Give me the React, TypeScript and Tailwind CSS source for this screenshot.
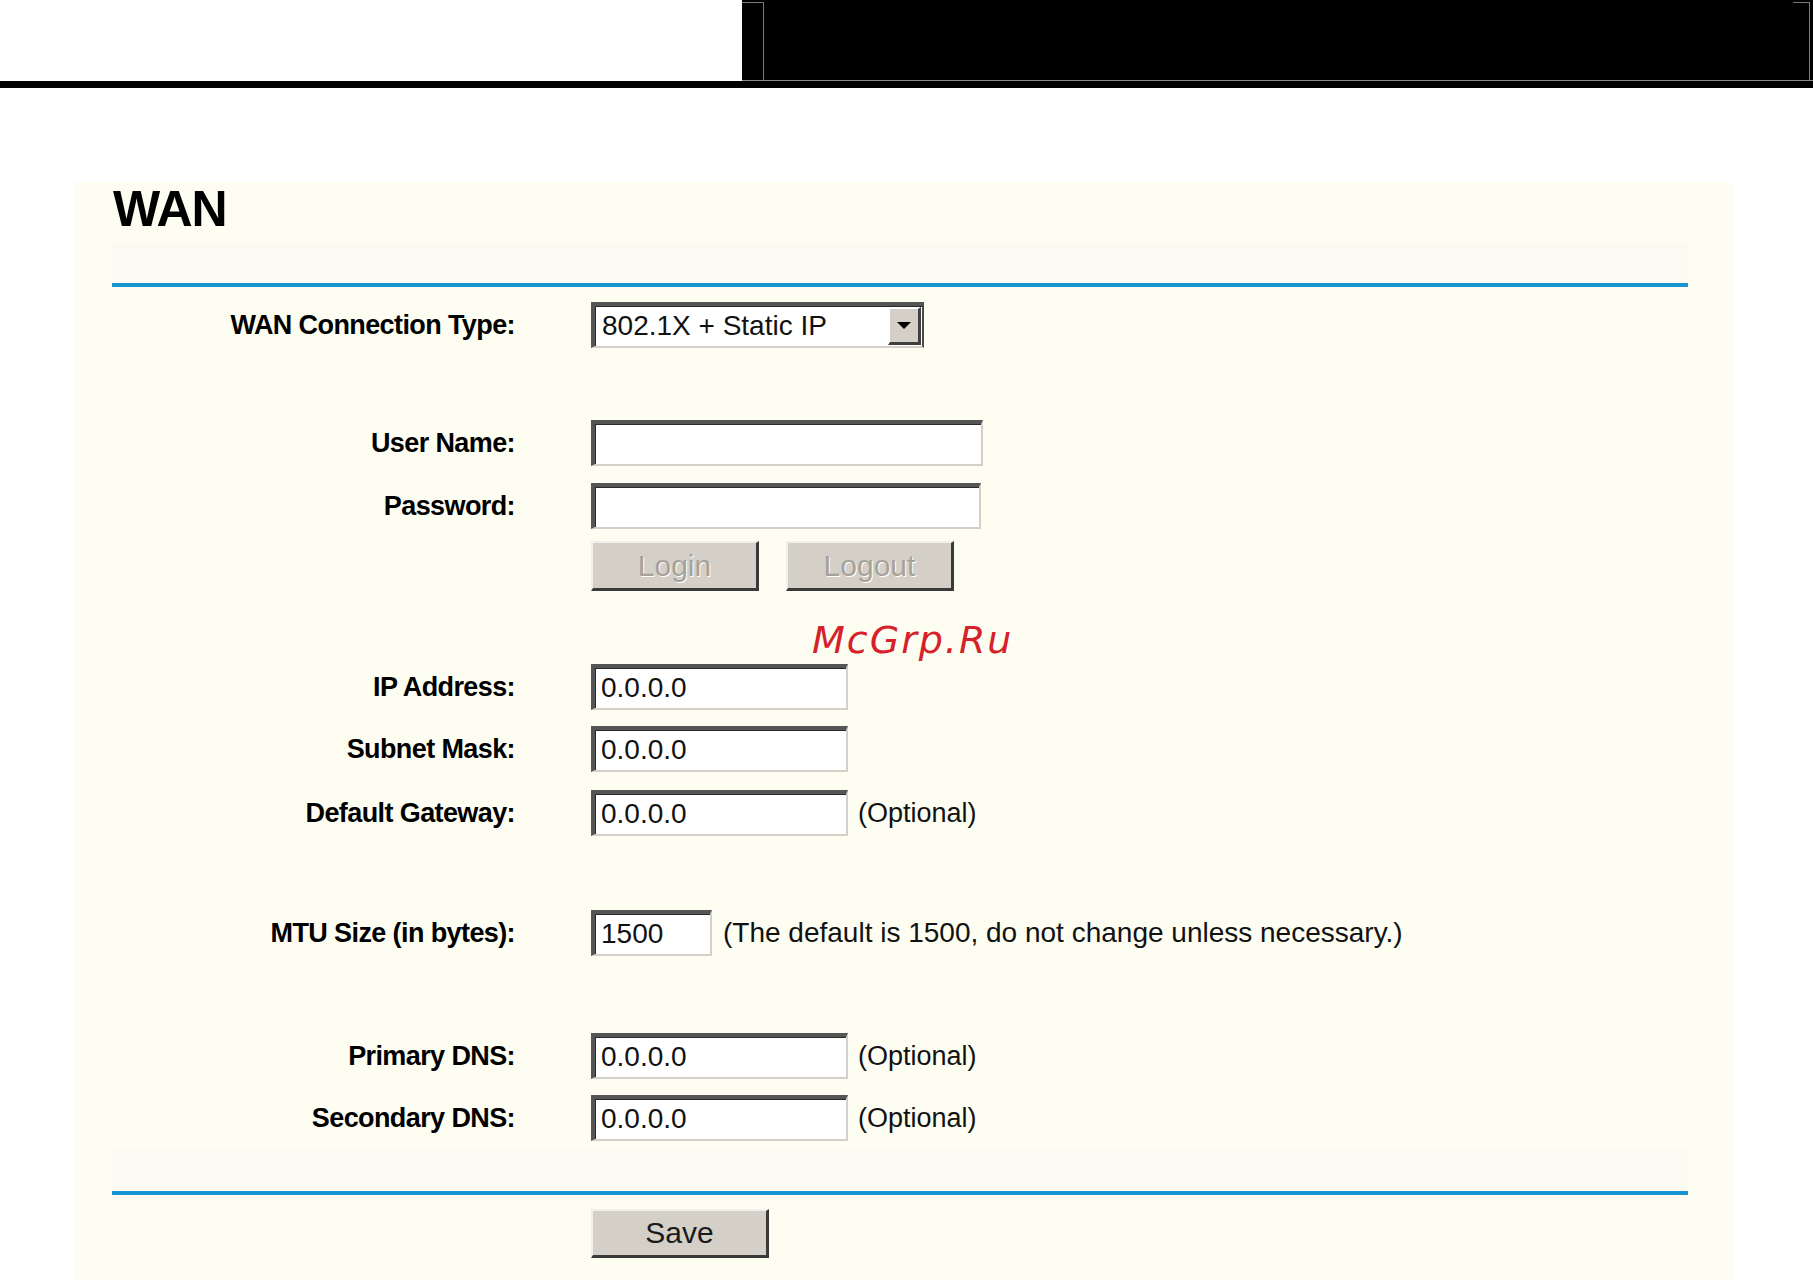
import React from "react";

const LABEL =
  "w-[403px] shrink-0 text-right text-[27px] font-bold tracking-[-0.6px] leading-none text-black font-['Liberation_Sans',Arial,sans-serif]";
const TEXT = "text-[28px] leading-none text-[#111] font-['Liberation_Sans',Arial,sans-serif]";

function Field({ w, value }: { w: string; value?: string }) {
  return (
    <div
      className={`${w} h-[46px] bg-white border-t-4 border-l-4 border-t-[#555555] border-l-[#555555] border-b-2 border-r-2 border-b-[#d4d0c8] border-r-[#d4d0c8] shadow-[inset_1px_1px_0_#2a2a2a] flex items-center pl-[6px] ${TEXT}`}
    >
      {value}
    </div>
  );
}

function Row({ mt, label, children }: { mt: string; label: string; children: React.ReactNode }) {
  return (
    <div className={`flex items-center h-[46px] ${mt}`}>
      <div className={LABEL}>{label}</div>
      <div className="ml-[76px] flex items-center">{children}</div>
    </div>
  );
}

function Btn({ w, h, children, disabled }: { w: string; h: string; children: React.ReactNode; disabled?: boolean }) {
  return (
    <div
      className={`${w} ${h} bg-[#d4d0c8] border-t-2 border-l-2 border-t-[#f2f0ea] border-l-[#f2f0ea] border-b-[3px] border-r-[3px] border-b-[#3a3a3a] border-r-[#3a3a3a] flex items-center justify-center text-[30px] leading-none font-['Liberation_Sans',Arial,sans-serif] ${
        disabled ? "text-[#a6a29a] [text-shadow:1px_1px_0_#ffffff]" : "text-[#1a1a1a]"
      }`}
    >
      {children}
    </div>
  );
}

function Optional() {
  return <span className={`ml-[10px] text-[27px] leading-none text-[#111] font-['Liberation_Sans',Arial,sans-serif]`}>(Optional)</span>;
}

export default function App() {
  return (
    <div className="relative w-[1813px] min-h-[1280px] bg-white overflow-hidden">
      {/* header */}
      <div className="flex h-[81px]">
        <div className="w-[742px] bg-white" />
        <div className="relative flex-1 bg-black border-b border-b-[#8a8a8a]">
          <div className="ml-[21px] mr-[3px] mt-[2px] h-[78px] border-l border-r border-[#7a7a7a]" />
          <div className="absolute left-0 top-[2px] w-[21px] h-px bg-[#7a7a7a]" />
          <div className="absolute right-[3px] top-[2px] w-[17px] h-px bg-[#7a7a7a]" />
        </div>
      </div>
      <div className="h-[7px] bg-black" />

      {/* panel */}
      <div className="mt-[94px] ml-[74px] w-[1659px] bg-[#fdfdf1] pl-[38px] pr-[45px] pb-[22px]">
        <div className="pt-[2px] h-[52px] pl-[1px] text-[50px] font-bold leading-none tracking-[-1px] text-black font-['Liberation_Sans',Arial,sans-serif]">
          WAN
        </div>
        <div className="mt-[8px] h-[41px] bg-[#fbfbf4]" />
        <div className="h-[4px] bg-[#1596d0]" />

        {/* connection type */}
        <div className="flex items-center h-[46px] mt-[15px]">
          <div className={LABEL}>WAN Connection Type:</div>
          <div className="ml-[76px] w-[333px] h-[46px] bg-white border-t-4 border-l-4 border-t-[#555555] border-l-[#555555] border-b-2 border-r-2 border-b-[#d4d0c8] border-r-[#4a4a4a] shadow-[inset_1px_1px_0_#2a2a2a] flex items-center">
            <span className={`flex-1 pl-[7px] ${TEXT}`}>802.1X + Static IP</span>
            <div className="w-[33px] h-[38px] mr-[1px] bg-[#d4d0c8] border-t-2 border-l-2 border-t-[#ffffff] border-l-[#ffffff] border-b-[3px] border-r-[3px] border-b-[#404040] border-r-[#404040] flex items-center justify-center">
              <div className="w-0 h-0 border-l-[7px] border-r-[7px] border-t-[7px] border-l-transparent border-r-transparent border-t-black" />
            </div>
          </div>
        </div>

        <Row mt="mt-[72px]" label="User Name:">
          <Field w="w-[392px]" />
        </Row>
        <Row mt="mt-[17px]" label="Password:">
          <Field w="w-[390px]" />
        </Row>
        <div className="flex items-center h-[50px] mt-[12px]">
          <div className="w-[403px] shrink-0" />
          <div className="ml-[76px] flex items-center gap-[27px]">
            <Btn w="w-[168px]" h="h-[50px]" disabled>
              Login
            </Btn>
            <Btn w="w-[168px]" h="h-[50px]" disabled>
              Logout
            </Btn>
          </div>
        </div>

        <Row mt="mt-[73px]" label="IP Address:">
          <Field w="w-[257px]" value="0.0.0.0" />
        </Row>
        <Row mt="mt-[16px]" label="Subnet Mask:">
          <Field w="w-[257px]" value="0.0.0.0" />
        </Row>
        <Row mt="mt-[18px]" label="Default Gateway:">
          <Field w="w-[257px]" value="0.0.0.0" />
          <Optional />
        </Row>

        <Row mt="mt-[74px]" label="MTU Size (in bytes):">
          <Field w="w-[121px]" value="1500" />
          <span className={`ml-[11px] ${TEXT}`}>(The default is 1500, do not change unless necessary.)</span>
        </Row>

        <Row mt="mt-[77px]" label="Primary DNS:">
          <Field w="w-[257px]" value="0.0.0.0" />
          <Optional />
        </Row>
        <Row mt="mt-[16px]" label="Secondary DNS:">
          <Field w="w-[257px]" value="0.0.0.0" />
          <Optional />
        </Row>

        <div className="mt-[9px] h-[41px] bg-[#fbfbf4]" />
        <div className="h-[4px] bg-[#1596d0]" />

        <div className="flex items-center h-[49px] mt-[14px]">
          <div className="w-[403px] shrink-0" />
          <div className="ml-[76px]">
            <Btn w="w-[178px]" h="h-[49px]">Save</Btn>
          </div>
        </div>
      </div>

      {/* watermark */}
      <div className="absolute left-[812px] top-[621px] text-[38px] italic leading-none tracking-[2px] text-[#d6202a] font-['DejaVu_Sans',sans-serif]">
        McGrp.Ru
      </div>
    </div>
  );
}
